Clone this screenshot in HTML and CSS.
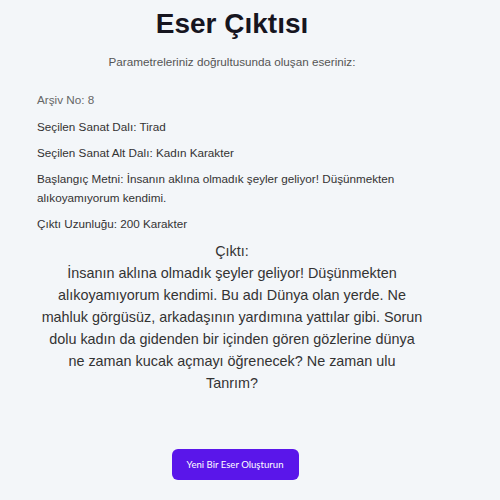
FILE: index.html
```html
<!DOCTYPE html>
<html lang="tr">
<head>
<meta charset="utf-8">
<title>Eser Çıktısı</title>
<link rel="stylesheet" href="styles.css">
</head>
<body>
<main class="page">
  <h1 class="title">Eser Çıktısı</h1>
  <p class="subtitle">Parametreleriniz doğrultusunda oluşan eseriniz:</p>
  <section class="info">
    <p class="info-row muted">Arşiv No: 8</p>
    <p class="info-row">Seçilen Sanat Dalı: Tirad</p>
    <p class="info-row">Seçilen Sanat Alt Dalı: Kadın Karakter</p>
    <p class="info-row">Başlangıç Metni: İnsanın aklına olmadık şeyler geliyor! Düşünmekten alıkoyamıyorum kendimi.</p>
    <p class="info-row">Çıktı Uzunluğu: 200 Karakter</p>
  </section>
  <section class="output">
    <div class="output-label">Çıktı:</div>
    <p class="output-text">İnsanın aklına olmadık şeyler geliyor! Düşünmekten alıkoyamıyorum kendimi. Bu adı Dünya olan yerde. Ne mahluk görgüsüz, arkadaşının yardımına yattılar gibi. Sorun dolu kadın da gidenden bir içinden gören gözlerine dünya ne zaman kucak açmayı öğrenecek? Ne zaman ulu<br>Tanrım?</p>
  </section>
  <div class="actions">
    <button class="btn" type="button">Yeni Bir Eser Oluşturun</button>
  </div>
</main>
</body>
</html>
```
FILE: styles.css
```css
html, body {
  margin: 0;
  padding: 0;
  background: #f3f6f9;
}
body {
  font-family: "Liberation Sans", Arial, sans-serif;
  color: #333;
}
.page {
  width: 464px;
  padding-top: 7px;
  display: flex;
  flex-direction: column;
  align-items: center;
}
.title {
  margin: 0;
  font-size: 28px;
  font-weight: 700;
  line-height: 33px;
  color: #16151f;
}
.subtitle {
  margin: 13px 0 0;
  font-size: 11.7px;
  line-height: 18.7px;
  color: #555;
}
.info {
  align-self: stretch;
  padding: 0 37px;
  margin-top: 12px;
}
.info-row {
  margin: 7.6px 0 0;
  font-size: 11.7px;
  line-height: 18.7px;
  color: #333;
}
.info-row.muted {
  color: #666;
}
.output {
  margin-top: 6px;
  width: 383px;
  text-align: center;
}
.output-label {
  font-size: 14.4px;
  line-height: 22px;
  color: #333;
}
.output-text {
  margin: 0;
  font-size: 14.4px;
  line-height: 22px;
  color: #333;
}
.actions {
  margin-top: 55px;
  display: flex;
  justify-content: center;
  padding-left: 6px;
}
.btn {
  width: 127px;
  height: 31px;
  border: 0;
  border-radius: 6px;
  background: #5a16ea;
  color: #fff;
  font-family: Lato, "Liberation Sans", sans-serif;
  font-size: 9.6px;
  padding: 0;
  cursor: pointer;
}
```
